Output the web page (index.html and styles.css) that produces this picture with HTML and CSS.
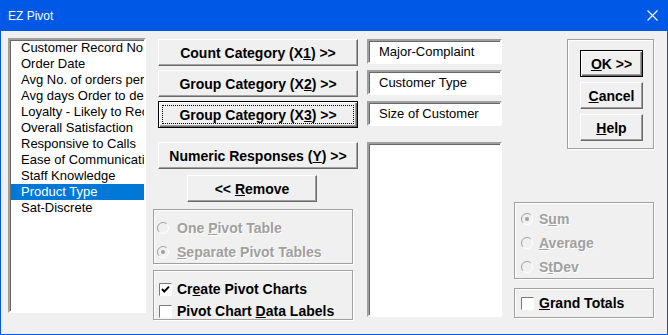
FILE: index.html
```html
<!DOCTYPE html>
<html>
<head>
<meta charset="utf-8">
<link rel="stylesheet" href="styles.css">
</head>
<body>
<div class="window">
  <div class="titlebar">
    <span class="title">EZ Pivot</span>
    <svg class="close" width="11" height="11" viewBox="0 0 11 11"><path d="M0.5 0.5 L10.5 10.5 M10.5 0.5 L0.5 10.5" stroke="#fff" stroke-width="1.1" fill="none"/></svg>
  </div>
  <div class="body">
    <div class="list">
      <div class="item">Customer Record No.</div>
      <div class="item">Order Date</div>
      <div class="item">Avg No. of orders per month</div>
      <div class="item">Avg days Order to delivery</div>
      <div class="item">Loyalty - Likely to Recommend</div>
      <div class="item">Overall Satisfaction</div>
      <div class="item">Responsive to Calls</div>
      <div class="item">Ease of Communication</div>
      <div class="item">Staff Knowledge</div>
      <div class="item selected">Product Type</div>
      <div class="item">Sat-Discrete</div>
    </div>

    <div class="col-mid">
      <div class="btn wide b1"><span>Count Category (X<u>1</u>) &gt;&gt;</span></div>
      <div class="btn wide b2"><span>Group Category (X<u>2</u>) &gt;&gt;</span></div>
      <div class="btn wide b3 focus"><span class="focus-rect"><span>Group Category (X<u>3</u>) &gt;&gt;</span></span></div>
      <div class="btn wide b4"><span>Numeric Responses (<u>Y</u>) &gt;&gt;</span></div>
      <div class="btn remove"><span>&lt;&lt; <u>R</u>emove</span></div>
      <div class="group radios">
        <div class="opt disabled">
          <svg class="radio" width="12" height="12" viewBox="0 0 12 12"><path d="M9.9 2.1 A5.5 5.5 0 0 0 2.1 9.9" stroke="#a0a0a0" fill="none"/><path d="M9.9 2.1 A5.5 5.5 0 0 1 2.1 9.9" stroke="#fff" fill="none"/><circle cx="6" cy="6" r="4.3" fill="#f0f0f0"/></svg>
          <span>One <u>P</u>ivot Table</span>
        </div>
        <div class="opt disabled">
          <svg class="radio" width="12" height="12" viewBox="0 0 12 12"><path d="M9.9 2.1 A5.5 5.5 0 0 0 2.1 9.9" stroke="#a0a0a0" fill="none"/><path d="M9.9 2.1 A5.5 5.5 0 0 1 2.1 9.9" stroke="#fff" fill="none"/><circle cx="6" cy="6" r="4.3" fill="#f0f0f0"/><circle cx="6" cy="6" r="2" fill="#a0a0a0"/></svg>
          <span><u>S</u>eparate Pivot Tables</span>
        </div>
      </div>
      <div class="group checks">
        <div class="opt">
          <svg class="check" width="13" height="13" viewBox="0 0 13 13"><rect x="0" y="0" width="13" height="13" fill="#fff"/><path d="M0.5 12.5 V0.5 H12.5" stroke="#7a7a7a" fill="none"/><path d="M3 6 L5.3 8.5 L10 3.6" stroke="#000" stroke-width="1.9" fill="none"/></svg>
          <span>Cr<u>e</u>ate Pivot Charts</span>
        </div>
        <div class="opt">
          <svg class="check" width="13" height="13" viewBox="0 0 13 13"><rect x="0" y="0" width="13" height="13" fill="#fff"/><path d="M0.5 12.5 V0.5 H12.5" stroke="#7a7a7a" fill="none"/></svg>
          <span>Pivot Chart <u>D</u>ata Labels</span>
        </div>
      </div>
    </div>

    <div class="col-fields">
      <div class="field">Major-Complaint</div>
      <div class="field">Customer Type</div>
      <div class="field">Size of Customer</div>
      <div class="field big"></div>
    </div>

    <div class="col-right">
      <div class="group okgroup">
        <div class="btn small focus"><span><u>O</u>K &gt;&gt;</span></div>
        <div class="btn small"><span><u>C</u>ancel</span></div>
        <div class="btn small"><span><u>H</u>elp</span></div>
      </div>
      <div class="group stats">
        <div class="opt disabled">
          <svg class="radio" width="12" height="12" viewBox="0 0 12 12"><path d="M9.9 2.1 A5.5 5.5 0 0 0 2.1 9.9" stroke="#a0a0a0" fill="none"/><path d="M9.9 2.1 A5.5 5.5 0 0 1 2.1 9.9" stroke="#fff" fill="none"/><circle cx="6" cy="6" r="4.3" fill="#f0f0f0"/><circle cx="6" cy="6" r="2" fill="#a0a0a0"/></svg>
          <span>S<u>u</u>m</span>
        </div>
        <div class="opt disabled">
          <svg class="radio" width="12" height="12" viewBox="0 0 12 12"><path d="M9.9 2.1 A5.5 5.5 0 0 0 2.1 9.9" stroke="#a0a0a0" fill="none"/><path d="M9.9 2.1 A5.5 5.5 0 0 1 2.1 9.9" stroke="#fff" fill="none"/><circle cx="6" cy="6" r="4.3" fill="#f0f0f0"/></svg>
          <span><u>A</u>verage</span>
        </div>
        <div class="opt disabled">
          <svg class="radio" width="12" height="12" viewBox="0 0 12 12"><path d="M9.9 2.1 A5.5 5.5 0 0 0 2.1 9.9" stroke="#a0a0a0" fill="none"/><path d="M9.9 2.1 A5.5 5.5 0 0 1 2.1 9.9" stroke="#fff" fill="none"/><circle cx="6" cy="6" r="4.3" fill="#f0f0f0"/></svg>
          <span>S<u>t</u>Dev</span>
        </div>
      </div>
      <div class="group grand">
        <div class="opt">
          <svg class="check" width="13" height="13" viewBox="0 0 13 13"><rect x="0" y="0" width="13" height="13" fill="#fff"/><path d="M0.5 12.5 V0.5 H12.5" stroke="#7a7a7a" fill="none"/></svg>
          <span><u>G</u>rand Totals</span>
        </div>
      </div>
    </div>
  </div>
</div>
</body>
</html>
```

FILE: styles.css
```css
* { box-sizing: border-box; }
html, body { margin: 0; padding: 0; }
body {
  width: 668px;
  height: 335px;
  overflow: hidden;
  background: #f0f0f0;
  font-family: "Liberation Sans", Arial, sans-serif;
}
.window {
  width: 668px;
  height: 335px;
  border: 1px solid #0058e6;
  border-top: none;
  background: #f0f0f0;
  display: flex;
  flex-direction: column;
}
.titlebar {
  height: 31px;
  margin: 0 -1px;
  background: #0058e6;
  display: flex;
  align-items: center;
  justify-content: space-between;
  padding: 0 10px 0 8px;
  color: #fff;
}
.title {
  font-family: "Liberation Sans Narrow", "Liberation Sans", Arial, sans-serif;
  font-size: 12px;
}
.close { display: block; }

.body {
  display: flex;
  align-items: flex-start;
  padding-left: 7px;
}

/* list box */
.list {
  width: 138px;
  height: 275px;
  margin-top: 7px;
  background: #fff;
  border: 2px solid;
  border-color: #a0a0a0 #fff #fff #a0a0a0;
  box-shadow: inset 1px 1px 0 #696969;
  padding: 0 0 0 1px;
  overflow: hidden;
  font-size: 13px;
}
.item {
  height: 16px;
  line-height: 16px;
  padding-left: 10px;
  white-space: nowrap;
  color: #000;
}
.item.selected {
  background: #0078d7;
  color: #fff;
}

/* buttons */
.btn {
  display: flex;
  align-items: center;
  justify-content: center;
  height: 27px;
  background: #f0f0f0;
  border: 1px solid;
  border-color: #fff #696969 #696969 #fff;
  box-shadow: inset -1px -1px 0 #a0a0a0;
  font-size: 14px;
  font-weight: bold;
  color: #000;
  white-space: nowrap;
}
.btn.focus {
  border: 1px solid #000;
  box-shadow: inset 1px 1px 0 #fff, inset -1px -1px 0 #696969, inset -2px -2px 0 #a0a0a0;
}
.focus-rect {
  display: flex;
  align-items: center;
  justify-content: center;
  width: calc(100% - 8px);
  height: calc(100% - 8px);
  outline: 1px dotted #000;
}

.col-mid {
  width: 205px;
  margin-left: 7px;
  margin-top: 8px;
  display: flex;
  flex-direction: column;
}
.btn.wide { width: 200px; margin-left: 5px; }
.b2, .b3 { margin-top: 4px; }
.b4 { margin-top: 14px; }
.remove { width: 130px; margin-left: 34px; margin-top: 6px; }

.group {
  border: 1px solid #a0a0a0;
  box-shadow: inset 1px 1px 0 #fff, 1px 1px 0 #fff;
}
.radios {
  width: 200px;
  height: 55px;
  margin-top: 7px;
  padding: 6px 0 0 3px;
}
.checks {
  width: 200px;
  height: 50px;
  margin-top: 6px;
  padding: 7px 0 0 5px;
}
.opt {
  display: flex;
  align-items: center;
  height: 24px;
  font-size: 14px;
  font-weight: bold;
  color: #000;
  white-space: nowrap;
}
.checks .opt { height: 22px; }
.opt svg { display: block; flex: none; }
.radios .radio { margin-right: 8px; }
.checks .check { margin-right: 5px; }
.opt.disabled { color: #a0a0a0; text-shadow: 1px 1px 0 #fff; }
.opt.disabled u { text-decoration-color: #a0a0a0; }

/* fields */
.col-fields {
  width: 135px;
  margin-left: 9px;
  margin-top: 8px;
  display: flex;
  flex-direction: column;
  gap: 6px;
}
.field {
  height: 25px;
  background: #fff;
  border: 2px solid;
  border-color: #a0a0a0 #fff #fff #a0a0a0;
  box-shadow: inset 1px 1px 0 #696969;
  font-size: 13px;
  line-height: 21px;
  padding-left: 10px;
  white-space: nowrap;
  overflow: hidden;
}
.field.big { height: 175px; margin-top: 10px; }

/* right column */
.col-right {
  width: 140px;
  margin-left: 12px;
  margin-top: 8px;
  display: flex;
  flex-direction: column;
}
.okgroup {
  width: 87px;
  height: 110px;
  margin-left: 53px;
  padding: 10px 0 0 12px;
  display: flex;
  flex-direction: column;
  gap: 5px;
}
.btn.small { width: 63px; height: 27px; }
.stats {
  height: 77px;
  margin-top: 53px;
  padding: 4px 0 0 6px;
}
.stats .opt { height: 24px; }
.stats .radio { margin-right: 6px; }
.grand {
  height: 30px;
  margin-top: 9px;
  padding: 1px 0 0 6px;
}
.grand .opt { height: 26px; }
.grand .check { margin-right: 5px; }
```
